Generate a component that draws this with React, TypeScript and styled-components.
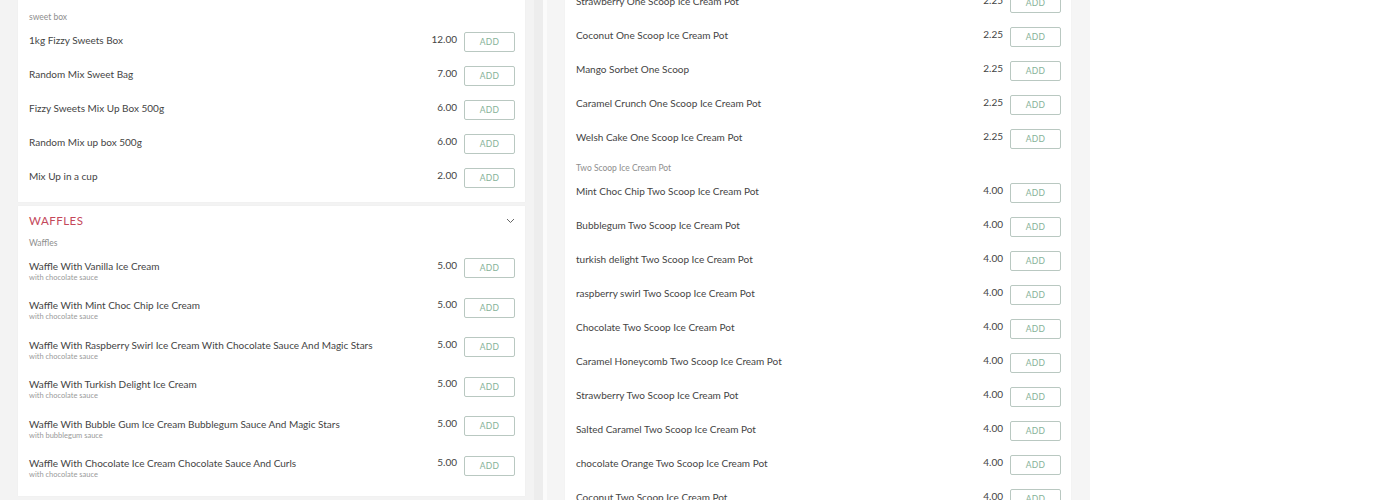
import React from "react";
import styled, { createGlobalStyle } from "styled-components";

const Global = createGlobalStyle`
  html, body { margin: 0; padding: 0; overflow: hidden; background: #ffffff; }
  body { font-family: Lato, "Open Sans", Arial, sans-serif; -webkit-font-smoothing: antialiased; }
  * { box-sizing: border-box; }
`;

const Page = styled.div`
  display: flex;
  width: 1090px;
  height: 500px;
  overflow: hidden;
`;

const LeftCol = styled.div`
  width: 543px;
  flex: none;
  background: #f3f3f3;
  padding: 0 9px 0 18px;
  border-right: 9px solid #ededed;
  display: flex;
  flex-direction: column;
  gap: 4px;
`;

const RightCol = styled.div`
  width: 547px;
  flex: none;
  background: #f5f5f5;
  padding: 0 19px 0 18px;
  border-left: 4px solid #fbfbfb;
`;

const Card = styled.div<{ $top?: number; $shift?: number }>`
  background: #ffffff;
  padding: ${(p) => p.$top ?? 0}px 10px 0 11px;
  margin-top: ${(p) => p.$shift ?? 0}px;
  box-shadow: 0 0 1px rgba(0, 0, 0, 0.06);
`;

const Header = styled.div`
  display: flex;
  align-items: center;
  justify-content: space-between;
  padding: 7px 0 9px 0;
`;

const Title = styled.h2`
  margin: 0;
  font-size: 11.5px;
  line-height: 16px;
  font-weight: 400;
  letter-spacing: 0.5px;
  color: #c4475a;
`;

const SectionLabel = styled.div`
  font-size: 8.5px;
  line-height: 10px;
  padding-bottom: 10px;
  color: #8e8e8e;
`;

const Row = styled.div<{ $tall?: boolean }>`
  display: flex;
  align-items: flex-start;
  height: ${(p) => (p.$tall ? "39.6px" : "34px")};
`;

const Info = styled.div`
  flex: 1;
  min-width: 0;
  display: flex;
  flex-direction: column;
`;

const Name = styled.div`
  font-size: 10px;
  line-height: 14px;
  padding-top: 0.5px;
  color: #444444;
  white-space: nowrap;
`;

const Sub = styled.div`
  font-size: 7.5px;
  line-height: 10px;
  color: #9a9a9a;
`;

const Price = styled.div`
  font-size: 10px;
  line-height: 13px;
  padding-top: 0.5px;
  color: #444444;
  margin-right: 7px;
`;

const AddBtn = styled.button`
  width: 51px;
  height: 20px;
  flex: none;
  padding: 0;
  background: #ffffff;
  border: 1px solid #b9c8c1;
  border-radius: 2px;
  font-family: Lato, Arial, sans-serif;
  font-size: 8.5px;
  letter-spacing: 0.3px;
  color: #86b298;
  cursor: pointer;
`;

const Chevron = () => (
  <svg width="9" height="6" viewBox="0 0 9 6">
    <path d="M1 1 L4.5 4.5 L8 1" fill="none" stroke="#666" strokeWidth="1" />
  </svg>
);

type Item = { name: string; price: string; sub?: string };

const ItemRow = ({ item, tall }: { item: Item; tall?: boolean }) => (
  <Row $tall={tall}>
    <Info>
      <Name>{item.name}</Name>
      {item.sub && <Sub>{item.sub}</Sub>}
    </Info>
    <Price>{item.price}</Price>
    <AddBtn>ADD</AddBtn>
  </Row>
);

const sweets: Item[] = [
  { name: "1kg Fizzy Sweets Box", price: "12.00" },
  { name: "Random Mix Sweet Bag", price: "7.00" },
  { name: "Fizzy Sweets Mix Up Box 500g", price: "6.00" },
  { name: "Random Mix up box 500g", price: "6.00" },
  { name: "Mix Up in a cup", price: "2.00" },
];

const waffles: Item[] = [
  { name: "Waffle With Vanilla Ice Cream", price: "5.00", sub: "with chocolate sauce" },
  { name: "Waffle With Mint Choc Chip Ice Cream", price: "5.00", sub: "with chocolate sauce" },
  { name: "Waffle With Raspberry Swirl Ice Cream With Chocolate Sauce And Magic Stars", price: "5.00", sub: "with chocolate sauce" },
  { name: "Waffle With Turkish Delight Ice Cream", price: "5.00", sub: "with chocolate sauce" },
  { name: "Waffle With Bubble Gum Ice Cream Bubblegum Sauce And Magic Stars", price: "5.00", sub: "with bubblegum sauce" },
  { name: "Waffle With Chocolate Ice Cream Chocolate Sauce And Curls", price: "5.00", sub: "with chocolate sauce" },
];

const oneScoop: Item[] = [
  { name: "Strawberry One Scoop Ice Cream Pot", price: "2.25" },
  { name: "Coconut One Scoop Ice Cream Pot", price: "2.25" },
  { name: "Mango Sorbet One Scoop", price: "2.25" },
  { name: "Caramel Crunch One Scoop Ice Cream Pot", price: "2.25" },
  { name: "Welsh Cake One Scoop Ice Cream Pot", price: "2.25" },
];

const twoScoop: Item[] = [
  { name: "Mint Choc Chip Two Scoop Ice Cream Pot", price: "4.00" },
  { name: "Bubblegum Two Scoop Ice Cream Pot", price: "4.00" },
  { name: "turkish delight Two Scoop Ice Cream Pot", price: "4.00" },
  { name: "raspberry swirl Two Scoop Ice Cream Pot", price: "4.00" },
  { name: "Chocolate Two Scoop Ice Cream Pot", price: "4.00" },
  { name: "Caramel Honeycomb Two Scoop Ice Cream Pot", price: "4.00" },
  { name: "Strawberry Two Scoop Ice Cream Pot", price: "4.00" },
  { name: "Salted Caramel Two Scoop Ice Cream Pot", price: "4.00" },
  { name: "chocolate Orange Two Scoop Ice Cream Pot", price: "4.00" },
  { name: "Coconut Two Scoop Ice Cream Pot", price: "4.00" },
];

export default function App() {
  return (
    <>
      <Global />
      <Page>
        <LeftCol>
          <Card $top={12}>
            <SectionLabel>sweet box</SectionLabel>
            {sweets.map((it) => (
              <ItemRow key={it.name} item={it} />
            ))}
          </Card>
          <Card>
            <Header>
              <Title>WAFFLES</Title>
              <Chevron />
            </Header>
            <SectionLabel>Waffles</SectionLabel>
            {waffles.map((it) => (
              <ItemRow key={it.name} item={it} tall />
            ))}
          </Card>
        </LeftCol>
        <RightCol>
          <Card $shift={-7}>
            {oneScoop.map((it) => (
              <ItemRow key={it.name} item={it} />
            ))}
            <SectionLabel>Two Scoop Ice Cream Pot</SectionLabel>
            {twoScoop.map((it) => (
              <ItemRow key={it.name} item={it} />
            ))}
          </Card>
        </RightCol>
      </Page>
    </>
  );
}
